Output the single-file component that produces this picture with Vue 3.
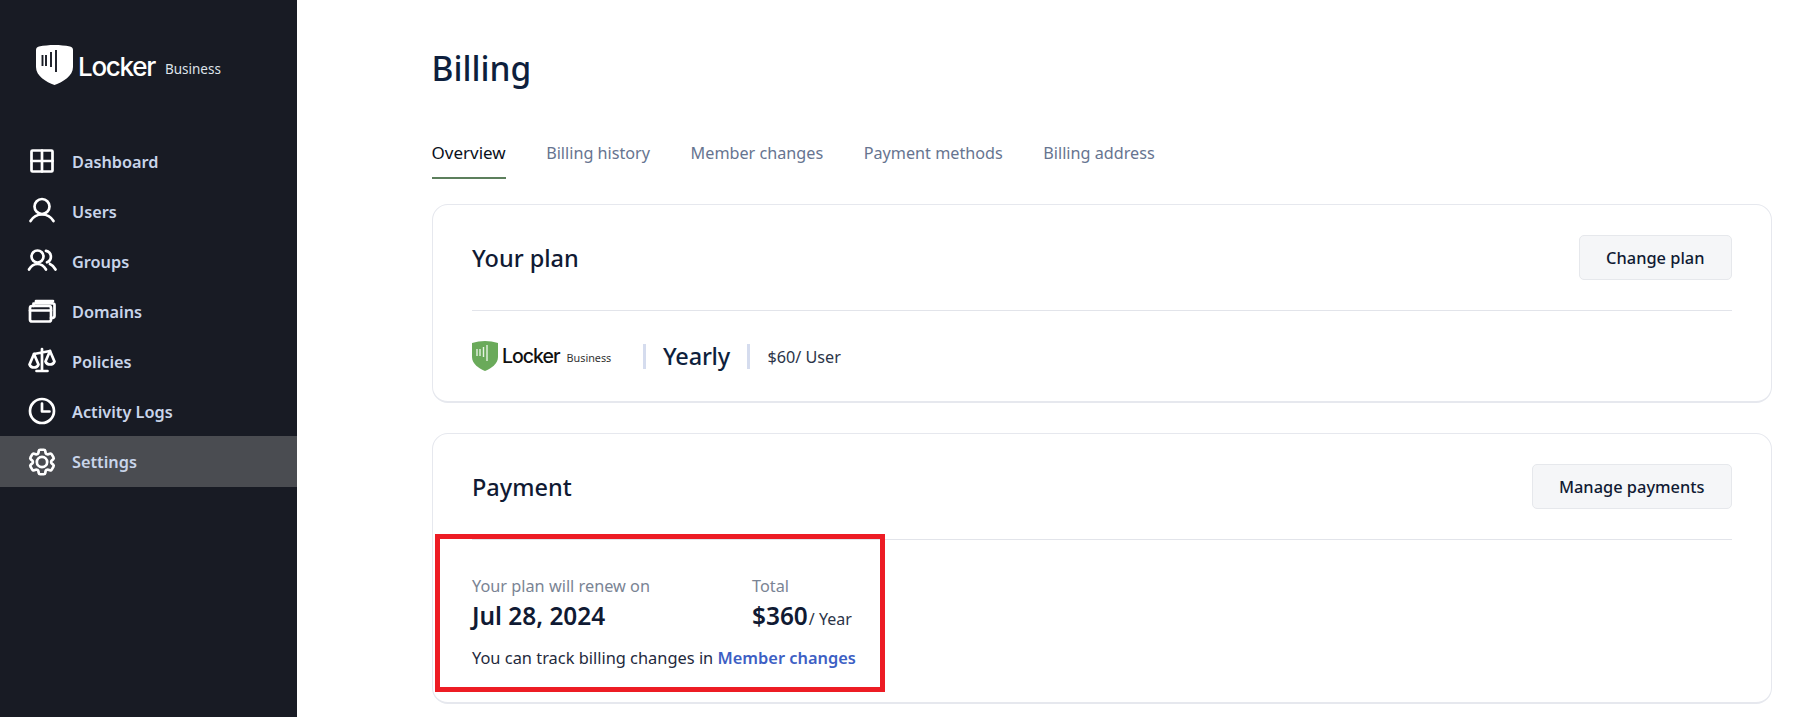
<script setup>
const nav = [
  { label: 'Dashboard', icon: 'dash' },
  { label: 'Users', icon: 'user' },
  { label: 'Groups', icon: 'group' },
  { label: 'Domains', icon: 'domain' },
  { label: 'Policies', icon: 'scale' },
  { label: 'Activity Logs', icon: 'clock' },
  { label: 'Settings', icon: 'gear', active: true }
]
const tabs = ['Overview', 'Billing history', 'Member changes', 'Payment methods', 'Billing address']
</script>

<template>
  <div class="page">
    <aside class="side">
      <div class="brand">
        <svg class="shield" viewBox="0 0 37 40">
          <path d="M0 5 Q0 2 3 1.500 C8 .5 13 0 18.500 0 C24 0 29 .5 34 1.500 Q37 2 37 5 V22 C37 31 27 37 18.500 40 C10 37 0 31 0 22 Z" fill="#fff" />
          <path d="M6.500 10 V21 M10 10 V21 M15 7 V22 M20 5 V27" stroke="#181b24" stroke-width="1.900" fill="none" />
        </svg>
        <span class="brand-name">Locker</span>
        <span class="brand-tier">Business</span>
      </div>
      <nav class="nav">
        <div v-for="item in nav" :key="item.label" class="nav-item" :class="{ active: item.active }">
          <svg class="nav-icon" viewBox="0 0 30 30" fill="none" stroke="#fff" stroke-width="2.700" stroke-linecap="round" stroke-linejoin="round">
            <template v-if="item.icon === 'dash'">
              <rect x="4.500" y="4.500" width="21" height="21" rx="1" />
              <path d="M15 4.500 V25.500 M4.500 15 H25.500" />
            </template>
            <template v-else-if="item.icon === 'user'">
              <circle cx="15" cy="10.500" r="7.500" />
              <path d="M3.500 25 C6 21 10 18.500 15 18.500 S24 21 26.500 25" />
            </template>
            <template v-else-if="item.icon === 'group'">
              <circle cx="10.500" cy="10.500" r="6" />
              <path d="M2 23.500 C4 20 7 18 10.500 18 S17 20 19 23.500" />
              <path d="M19 4.800 A6 6 0 0 1 20 16.300 M23 18 C25.500 19 27 21 28.500 23.500" />
            </template>
            <template v-else-if="item.icon === 'domain'">
              <rect x="3" y="10" width="21" height="15.500" rx="2" />
              <path d="M3 14.500 H24 M6.500 10 V7.500 H26 Q27.500 7.500 27.500 9 V20 Q27.500 22 24 22 M9 7.500 V5 H26" />
            </template>
            <template v-else-if="item.icon === 'scale'">
              <path d="M15 3 V24.500 M9.500 25 H20.500 M7 8 L15 6.500 L23 5" />
              <path d="M7 8 L2.500 18.500 C4 22.500 10 22.500 11.500 18.500 Z" />
              <path d="M23 5 L18.500 15.500 C20 19.500 26 19.500 27.500 15.500 Z" />
            </template>
            <template v-else-if="item.icon === 'clock'">
              <circle cx="15" cy="15" r="12" />
              <path d="M15 7.500 V15.500 H22.500" />
            </template>
            <template v-else>
              <g transform="translate(15 15) scale(1.360) translate(-12 -12)" stroke-width="2">
                <path d="M9.594 3.940c.09-.542.56-.94 1.110-.94h2.593c.55 0 1.020.398 1.110.94l.213 1.281c.063.374.313.686.645.87.074.04.147.083.22.127.325.196.72.257 1.075.124l1.217-.456a1.125 1.125 0 0 1 1.370.49l1.296 2.247a1.125 1.125 0 0 1-.26 1.431l-1.003.827c-.293.241-.438.613-.43.992a7.723 7.723 0 0 1 0 .255c-.008.378.137.75.43.991l1.004.827c.424.35.534.955.26 1.430l-1.298 2.247a1.125 1.125 0 0 1-1.369.491l-1.217-.456c-.355-.133-.75-.072-1.076.124a6.470 6.470 0 0 1-.22.128c-.331.183-.581.495-.644.869l-.213 1.281c-.09.543-.56.94-1.110.94h-2.594c-.55 0-1.019-.398-1.110-.94l-.213-1.281c-.062-.374-.312-.686-.644-.87a6.520 6.520 0 0 1-.22-.127c-.325-.196-.72-.257-1.076-.124l-1.217.456a1.125 1.125 0 0 1-1.369-.49l-1.297-2.247a1.125 1.125 0 0 1 .26-1.431l1.004-.827c.292-.24.437-.613.43-.991a6.932 6.932 0 0 1 0-.255c.007-.38-.138-.751-.43-.992l-1.004-.827a1.125 1.125 0 0 1-.26-1.430l1.297-2.247a1.125 1.125 0 0 1 1.370-.491l1.216.456c.356.133.751.072 1.076-.124.072-.044.146-.086.22-.128.332-.183.582-.495.644-.869l.214-1.280Z" />
                <circle cx="12" cy="12" r="3.800" />
              </g>
            </template>
          </svg>
          <span class="nav-label">{{ item.label }}</span>
        </div>
      </nav>
    </aside>

    <main class="main">
      <h1 class="title">Billing</h1>
      <div class="tabs">
        <div v-for="(t, i) in tabs" :key="t" class="tab" :class="{ current: i === 0 }">{{ t }}</div>
      </div>

      <section class="card plan">
        <div class="card-head">
          <h2>Your plan</h2>
          <button class="btn">Change plan</button>
        </div>
        <div class="plan-row">
          <div class="plan-logo">
            <svg class="plan-shield" viewBox="0 0 26 30">
              <path d="M0 2 C4 .7 9 0 13 0 C17 0 22 .7 26 2 V16 C26 23 19 27.500 13 30 C7 27.500 0 23 0 16 Z" fill="#6aaa5a" />
              <path d="M5 8 V15 M8 8 V15 M11.500 6 V16 M15 4 V20" stroke="#e6f2e2" stroke-width="1.400" fill="none" />
            </svg>
            <span class="plan-name">Locker</span>
            <span class="plan-tier">Business</span>
          </div>
          <span class="bar"></span>
          <span class="yearly">Yearly</span>
          <span class="bar"></span>
          <span class="price">$60/ User</span>
        </div>
      </section>

      <section class="card pay">
        <div class="card-head">
          <h2>Payment</h2>
          <button class="btn">Manage payments</button>
        </div>
        <div class="pay-cols">
          <div class="pay-col renew">
            <div class="muted">Your plan will renew on</div>
            <div class="big">Jul 28, 2024</div>
          </div>
          <div class="pay-col">
            <div class="muted">Total</div>
            <div class="big">$360<span class="per">/ Year</span></div>
          </div>
        </div>
        <p class="track">You can track billing changes in <a class="link">Member changes</a></p>
        <div class="redbox"></div>
      </section>
    </main>
  </div>
</template>

<style>
html, body { margin: 0; background: #fff; }
</style>

<style scoped>
.page {
  display: flex;
  width: 1804px;
  height: 717px;
  overflow: hidden;
  font-family: "Noto Sans", "Open Sans", sans-serif;
  color: #101a33;
}
.side {
  width: 297px;
  flex: none;
  background: #181b24;
  color: #c9d5ea;
}
.brand {
  display: flex;
  align-items: center;
  height: 40px;
  padding: 45px 0 0 36px;
  color: #fff;
}
.shield { width: 37px; height: 40px; flex: none; }
.brand-name {
  margin-left: 5px;
  padding-top: 3px;
  font-family: Inter, sans-serif;
  font-size: 26px;
  font-weight: 500;
  letter-spacing: -1.300px;
  line-height: 40px;
}
.brand-tier {
  margin-left: 10px;
  font-size: 13.500px;
  padding-top: 7px;
  color: #dfe3ea;
}
.nav { margin-top: 51px; }
.nav-item {
  display: flex;
  align-items: center;
  gap: 15px;
  height: 50px;
  padding-left: 27px;
  font-size: 16.300px;
  font-weight: 600;
}
.nav-label { padding-top: 1px; }
.nav-item.active { height: 51px; background: #4a4c51; }
.nav-icon { width: 30px; height: 30px; flex: none; }

.main {
  flex: 1;
  min-width: 0;
  padding: 44px 32px 0 134.500px;
}
.title {
  margin: 0;
  font-size: 33.500px;
  line-height: 48px;
  font-weight: 500;
  color: #0e1f3d;
}
.tabs {
  display: flex;
  gap: 40.500px;
  margin-top: 40px;
}
.tab {
  padding: 9px 0 12px;
  font-size: 16.200px;
  line-height: 24px;
  color: #667490;
  border-bottom: 2px solid transparent;
}
.tab.current {
  font-size: 17px;
  color: #0a1020;
  border-bottom-color: #5c7f5c;
}
.card {
  position: relative;
  box-sizing: border-box;
  padding: 30px 39.500px 0;
  border: 1px solid #e6e8ee;
  border-bottom-width: 2px;
  border-radius: 16px;
  background: #fff;
}
.plan { margin-top: 25px; height: 199px; }
.pay { margin-top: 30px; height: 271px; }
.card-head {
  display: flex;
  align-items: center;
  justify-content: space-between;
  padding-bottom: 30px;
  border-bottom: 1px solid #e2e4ea;
}
.card-head h2 {
  margin: 1px 0 0;
  font-size: 23.500px;
  font-weight: 500;
  line-height: 32px;
  color: #101a33;
}
.btn {
  height: 45px;
  box-sizing: border-box;
  padding: 0 26px;
  font: 500 16.400px/24px "Noto Sans", sans-serif;
  color: #101a33;
  background: #f5f6f8;
  border: 1px solid #e6e8ec;
  border-radius: 5px;
}
.plan-row {
  display: flex;
  align-items: center;
  margin-top: 30px;
  height: 30px;
}
.plan-logo { display: flex; align-items: center; width: 170.500px; flex: none; }
.plan-shield { width: 26px; height: 30px; flex: none; }
.plan-name {
  margin-left: 4px;
  font-family: Inter, sans-serif;
  font-size: 19.500px;
  letter-spacing: -1px;
  color: #111;
  font-weight: 500;
}
.plan-tier {
  margin-left: 7px;
  font-size: 10.800px;
  padding-top: 3px;
  color: #333;
}
.bar {
  width: 3px;
  height: 25px;
  background: #d5dcee;
  flex: none;
}
.yearly {
  margin: 0 17px 0 17.500px;
  font-size: 23.500px;
  font-weight: 500;
  letter-spacing: -0.200px;
  color: #0e1f3d;
}
.price { margin-left: 17.500px; padding-top: 1px; font-size: 16.200px; color: #2b3448; }
.pay-cols { display: flex; margin-top: 34px; }
.pay-col.renew { width: 280px; }
.muted { font-size: 16.300px; line-height: 24px; color: #7a8494; }
.big {
  margin-top: 2px;
  font-size: 24.400px;
  line-height: 32px;
  font-weight: 600;
  color: #101a33;
}
.per { font-size: 16px; font-weight: 400; margin-left: 1px; color: #2b3448; }
.track {
  margin: 11px 0 0;
  font-size: 16.400px;
  line-height: 24px;
  color: #1f2a3d;
}
.link { color: #3d5fc4; font-weight: 600; }
.redbox {
  position: absolute;
  left: 2.500px;
  top: 100px;
  width: 450px;
  height: 158px;
  box-sizing: border-box;
  border: 5px solid #ed1c24;
}
</style>
